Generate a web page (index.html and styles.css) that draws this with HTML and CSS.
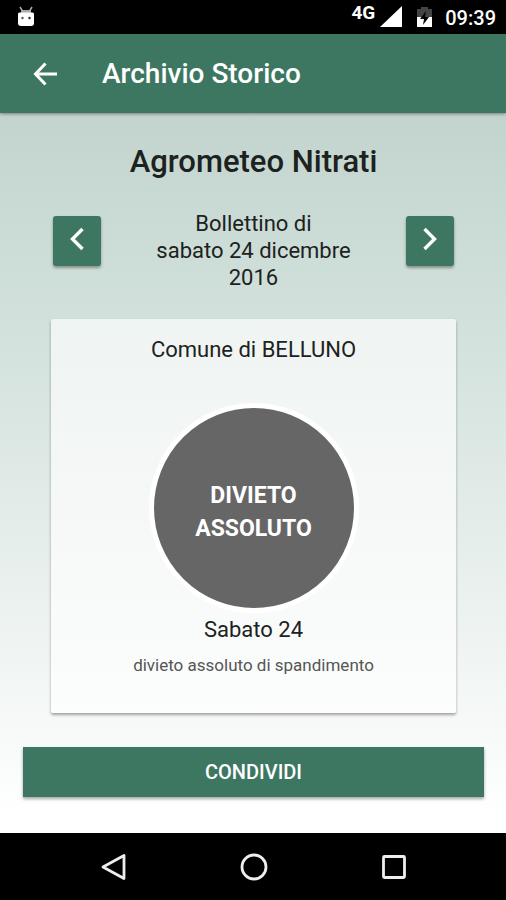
FILE: index.html
```html
<!DOCTYPE html>
<html lang="it">
<head>
<meta charset="utf-8">
<meta name="viewport" content="width=device-width, initial-scale=1">
<title>Archivio Storico</title>
<link rel="stylesheet" href="styles.css">
</head>
<body>
<div class="status">
  <svg class="robot" width="18" height="22" viewBox="0 0 18 22" aria-hidden="true">
    <path d="M3 1l2.500 4M15 1l-2.500 4" stroke="#aaa" stroke-width="1.500"/>
    <path d="M4 4h10v4H4z" fill="#aaa"/>
    <path d="M1 8q0-1.500 1.500-1.500h13q1.500 0 1.500 1.500v9q0 3-3 3H4q-3 0-3-3z" fill="#fff"/>
    <circle cx="5.500" cy="12" r="1.200" fill="#555"/><circle cx="12.500" cy="12" r="1.200" fill="#222"/>
  </svg>
  <div class="status-right">
    <span class="network">4G</span>
    <svg class="signal" width="22" height="22" viewBox="0 0 22 22" aria-hidden="true"><path d="M22 0v21H0z" fill="#fff"/></svg>
    <svg class="battery" width="15" height="22" viewBox="0 0 15 22" aria-hidden="true">
      <path d="M4 1h7v2h4v18H0V3h4z" fill="#444"/>
      <path d="M0 11h15v10H0z" fill="#fff"/>
      <path d="M9 5L3 13h4l-1 6 6-8H8z" fill="#000"/>
    </svg>
    <span class="clock">09:39</span>
  </div>
</div>
<header class="bar">
  <button class="back" aria-label="Indietro">
    <svg width="24" height="24" viewBox="0 0 24 24" aria-hidden="true"><path d="M12.500 1.500L2.500 12l10 10.500M2.500 12H24" fill="none" stroke="#fff" stroke-width="3"/></svg>
  </button>
  <h1 class="bar-title">Archivio Storico</h1>
</header>
<main class="content">
  <h2 class="title">Agrometeo Nitrati</h2>
  <div class="pager">
    <button class="step" aria-label="Precedente">
      <svg width="16" height="24" viewBox="0 0 16 24" aria-hidden="true"><path d="M13.500 2L3.500 12l10 10" fill="none" stroke="#fff" stroke-width="3.400"/></svg>
    </button>
    <p class="date">Bollettino di<br>sabato 24 dicembre<br>2016</p>
    <button class="step" aria-label="Successivo">
      <svg width="16" height="24" viewBox="0 0 16 24" aria-hidden="true"><path d="M2.500 2l10 10-10 10" fill="none" stroke="#fff" stroke-width="3.400"/></svg>
    </button>
  </div>
  <section class="card">
    <h3 class="place">Comune di BELLUNO</h3>
    <div class="badge">DIVIETO<br>ASSOLUTO</div>
    <p class="day">Sabato 24</p>
    <p class="note">divieto assoluto di spandimento</p>
  </section>
  <button class="share">CONDIVIDI</button>
</main>
<nav class="nav">
  <button class="nav-btn" aria-label="Indietro"><svg width="28" height="28" viewBox="0 0 28 28" aria-hidden="true"><path d="M24 2.500v23L3 14z" fill="none" stroke="#eee" stroke-width="2.800" stroke-linejoin="round"/></svg></button>
  <button class="nav-btn" aria-label="Home"><svg width="28" height="28" viewBox="0 0 28 28" aria-hidden="true"><circle cx="14" cy="14" r="12" fill="none" stroke="#eee" stroke-width="2.800"/></svg></button>
  <button class="nav-btn" aria-label="Recenti"><svg width="28" height="28" viewBox="0 0 28 28" aria-hidden="true"><rect x="3.500" y="3.500" width="21" height="21" rx="1" fill="none" stroke="#eee" stroke-width="2.800"/></svg></button>
</nav>
</body>
</html>
```
FILE: styles.css
```css
* { box-sizing: border-box; }
body {
  margin: 0;
  min-height: 100vh;
  display: flex;
  flex-direction: column;
  font-family: Roboto, "Liberation Sans", sans-serif;
  color: #1c2220;
  background: #000;
}
h1, h2, h3, p { margin: 0; font-weight: 400; }
button {
  border: 0;
  padding: 0;
  font: inherit;
  color: #fff;
  background: none;
  display: flex;
  align-items: center;
  justify-content: center;
}
.status {
  height: 34px;
  padding: 0 10px 0 17px;
  display: flex;
  align-items: center;
  justify-content: space-between;
  color: #fff;
}
.status-right { display: flex; align-items: center; height: 34px; }
.network { font-size: 19px; line-height: 18px; font-weight: 700; align-self: flex-start; padding-top: 4px; margin-right: 5px; }
.signal { margin-right: 15px; }
.battery { margin-right: 13px; }
.clock { font-size: 20px; line-height: 24px; font-weight: 500; padding-top: 2px; }
.bar {
  height: 79px;
  padding: 0 32px;
  display: flex;
  align-items: center;
  gap: 44px;
  background: #3d7762;
  color: #fff;
  box-shadow: 0 1px 3px rgba(0, 0, 0, .4);
  z-index: 1;
}
.back { width: 26px; height: 48px; }
.bar-title { font-size: 28px; font-weight: 500; }
.content {
  flex: 1;
  padding: 29px 22px 36px 23px;
  background: linear-gradient(#c3d4ce, #d2e1dc 30%, #e9f0ee 65%, #fff 98%);
  display: flex;
  flex-direction: column;
}
.title { font-size: 31px; line-height: 40px; font-weight: 500; text-align: center; }
.pager {
  display: flex;
  justify-content: space-between;
  align-items: flex-start;
  margin: 28px 30px 0;
}
.step {
  width: 48px;
  height: 50px;
  margin-top: 6px;
  padding-bottom: 4px;
  background: #3d7762;
  border-radius: 3px;
  box-shadow: 0 2px 3px rgba(0, 0, 0, .35);
}
.date { font-size: 22px; line-height: 27px; text-align: center; }
.card {
  flex: 1;
  margin: 28px 28px 34px;
  padding: 16px 16px 32px;
  display: flex;
  flex-direction: column;
  align-items: center;
  text-align: center;
  background: rgba(255, 255, 255, .65);
  border-radius: 2px;
  box-shadow: 0 2px 3px rgba(0, 0, 0, .35);
}
.place, .day { font-size: 22px; line-height: 30px; }
.badge {
  width: 210px;
  height: 210px;
  margin: 38px 0 2px;
  padding-top: 8px;
  border: 5px solid #fff;
  border-radius: 50%;
  display: flex;
  align-items: center;
  justify-content: center;
  background: #666;
  color: #fff;
  font-size: 23px;
  line-height: 33px;
  font-weight: 700;
}
.note { margin-top: 8px; font-size: 17px; line-height: 24px; color: #555; }
.share {
  height: 50px;
  background: #3d7762;
  font-size: 20px;
  font-weight: 500;
  box-shadow: 0 2px 3px rgba(0, 0, 0, .35);
}
.nav {
  height: 67px;
  padding: 0 42px 0 44px;
  display: flex;
  background: #000;
  z-index: 1;
}
.nav-btn { flex: 1; }
```
